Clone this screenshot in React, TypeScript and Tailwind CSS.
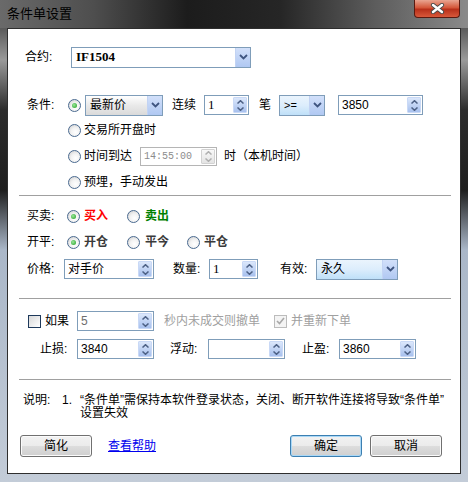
import React from "react";

const F = "font-['Liberation_Sans','Noto_Sans_CJK_SC',sans-serif]";

function Radio({ checked = false }: { checked?: boolean }) {
  return (
    <span className="flex h-[13px] w-[13px] shrink-0 items-center justify-center rounded-full border border-[#4a6a90] bg-[radial-gradient(circle_at_60%_65%,#ffffff_0%,#f2f2f2_45%,#c9c9c9_100%)]">
      {checked && (
        <span className="h-[5px] w-[5px] rounded-full bg-[radial-gradient(circle_at_40%_40%,#9be89b,#1c9a1c)]" />
      )}
    </span>
  );
}

function Check({ checked = false, disabled = false }: { checked?: boolean; disabled?: boolean }) {
  return (
    <span
      className={`flex h-[13px] w-[13px] shrink-0 items-center justify-center border ${
        disabled ? "border-[#bcbcbc] bg-[#f4f4f4]" : "border-[#1e395b] bg-[linear-gradient(135deg,#d8d8d8,#ffffff)]"
      }`}
    >
      {checked && (
        <svg width="9" height="8" viewBox="0 0 9 8">
          <path d="M1 4 L3.5 6.5 L8 1" fill="none" stroke={disabled ? "#a8a8a8" : "#222"} strokeWidth="1.6" />
        </svg>
      )}
    </span>
  );
}

function Up({ c }: { c: string }) {
  return (
    <svg width="7" height="4" viewBox="0 0 7 4">
      <path d="M0.5 3.5 L3.5 0.7 L6.5 3.5" fill="none" stroke={c} strokeWidth="1.5" />
    </svg>
  );
}
function Down({ c }: { c: string }) {
  return (
    <svg width="7" height="4" viewBox="0 0 7 4">
      <path d="M0.5 0.5 L3.5 3.3 L6.5 0.5" fill="none" stroke={c} strokeWidth="1.5" />
    </svg>
  );
}

function Spin({
  cls,
  value,
  valueCls = "text-[12px]",
  disabled = false,
  h = "h-[20px]",
}: {
  cls: string;
  value: string;
  valueCls?: string;
  disabled?: boolean;
  h?: string;
}) {
  return (
    <div
      className={`flex shrink-0 border bg-white ${h} ${disabled ? "border-[#b5b5b5]" : "border-[#7f9db9]"} ${cls}`}
    >
      <div className={`flex min-w-0 flex-1 items-center overflow-hidden whitespace-nowrap pl-[3px] ${valueCls}`}>
        {value}
      </div>
      <div
        className={`m-px flex w-[14px] shrink-0 flex-col items-center justify-center gap-[3px] rounded-[1px] ${
          disabled
            ? "border border-[#d2d2d2] bg-[linear-gradient(#f8f8f8,#e4e4e4)]"
            : "border border-[#c9d9f6] bg-[linear-gradient(#dbe7fb,#a8c1ee)]"
        }`}
      >
        <Up c={disabled ? "#b0b0b0" : "#4d6185"} />
        <Down c={disabled ? "#b0b0b0" : "#4d6185"} />
      </div>
    </div>
  );
}

function Combo({
  cls,
  value,
  bgCls,
  valueCls = "text-[12px]",
}: {
  cls: string;
  value: string;
  bgCls: string;
  valueCls?: string;
}) {
  return (
    <div className={`flex h-[21px] shrink-0 border border-[#7f9db9] ${cls}`}>
      <div className={`flex flex-1 items-center overflow-hidden pl-[4px] ${bgCls} ${valueCls}`}>{value}</div>
      <div className="flex w-[15px] items-center justify-center border-l border-[#c2d3f3] bg-[linear-gradient(#d2e0fa,#b0c8f2)]">
        <svg width="9" height="6" viewBox="0 0 9 6">
          <path d="M1 1 L4.5 4.5 L8 1" fill="none" stroke="#3f5580" strokeWidth="1.8" />
        </svg>
      </div>
    </div>
  );
}

function Btn({ label, def = false }: { label: string; def?: boolean }) {
  return (
    <div
      className={`flex h-[22px] w-[72px] items-center justify-center rounded-[3px] border bg-[linear-gradient(#f2f2f2_0%,#ebebeb_50%,#dddddd_51%,#cfcfcf_100%)] text-[12px] text-black ${
        def ? "border-[#3c7fb1] shadow-[inset_0_0_0_1px_#a9d8f7]" : "border-[#707070] shadow-[inset_0_0_0_1px_#fbfbfb]"
      }`}
    >
      {label}
    </div>
  );
}

function Sep() {
  return <div className="ml-[11px] mr-[9px] h-px shrink-0 bg-[#a0a0a0]" />;
}

export default function App() {
  return (
    <div
      className={`flex h-[482px] w-[468px] flex-col overflow-hidden ${F} bg-[linear-gradient(#6e6e6e_0px,#5a5a5a_28px,#9a9a9a_60px,#2c2c2c_110px,#1e1e1e_190px,#aab7c8_250px,#c3ccd8_482px)]`}
    >
      {/* title bar */}
      <div className="flex h-[28px] shrink-0 items-start justify-between bg-[linear-gradient(90deg,#6a6a6a_0%,#4e4e4e_20%,#1c1c1c_40%,#262626_60%,#5c5c5c_80%,#8a8a8a_100%)]">
        <div className="pl-[7px] pt-[5px] text-[13px] leading-[18px] text-black">条件单设置</div>
        <div className="mr-[8px] flex h-[18px] w-[46px] items-center justify-center rounded-b-[4px] border border-t-0 border-[#5a1a10] bg-[linear-gradient(#e9a591,#d4573a_45%,#b8301a_55%,#d8583a)]">
          <svg width="15" height="11" viewBox="0 0 15 11">
            <path d="M3 2 L12 9 M12 2 L3 9" stroke="#4a4a4a" strokeWidth="4.2" strokeLinecap="round" />
            <path d="M3 2 L12 9 M12 2 L3 9" stroke="#ffffff" strokeWidth="2.4" strokeLinecap="round" />
          </svg>
        </div>
      </div>

      {/* client */}
      <div className="mx-[7px] mb-[8px] flex flex-1 flex-col border border-[#2e2e2e] bg-white text-[12px] text-black">
        {/* 合约 */}
        <div className="mt-[17px] flex h-[22px] items-center pl-[17px]">
          <span className="w-[46px]">合约:</span>
          <Combo
            cls="w-[180px]"
            value="IF1504"
            bgCls="bg-white"
            valueCls="font-['Liberation_Serif',serif] font-bold text-[13px]"
          />
        </div>

        {/* 条件 */}
        <div className="mt-[26px] flex h-[22px] items-center pl-[19px]">
          <span className="w-[41px]">条件:</span>
          <Radio checked />
          <Combo cls="ml-[4px] w-[78px]" value="最新价" bgCls="bg-[linear-gradient(#ffffff,#e9e9e9_50%,#dadada)]" />
          <span className="ml-[9px] w-[24px]">连续</span>
          <Spin cls="ml-[8px] w-[45px]" value="1" valueCls="font-['Liberation_Serif',serif] text-[13px]" />
          <span className="ml-[10px] w-[12px]">笔</span>
          <Combo
            cls="ml-[8px] w-[46px]"
            value=">="
            bgCls="bg-[linear-gradient(#eaf4fd,#dcedfc_50%,#bfe0f8)]"
            valueCls="text-[11px]"
          />
          <Spin cls="ml-[13px] w-[85px]" value="3850" />
        </div>

        <div className="mt-[3px] flex h-[22px] items-center pl-[60px]">
          <Radio />
          <span className="ml-[3px]">交易所开盘时</span>
        </div>

        <div className="mt-[4px] flex h-[22px] items-center pl-[60px]">
          <Radio />
          <span className="ml-[3px] w-[48px]">时间到达</span>
          <Spin
            cls="ml-[8px] w-[77px]"
            h="h-[19px]"
            disabled
            value="14:55:00"
            valueCls="font-['Liberation_Mono',monospace] text-[10px] text-[#8c8c8c]"
          />
          <span className="ml-[7px]">时（本机时间）</span>
        </div>

        <div className="mt-[4px] flex h-[22px] items-center pl-[60px]">
          <Radio />
          <span className="ml-[3px]">预埋，手动发出</span>
        </div>

        <div className="mt-[2px]">
          <Sep />
        </div>

        {/* 买卖 */}
        <div className="mt-[9px] flex h-[22px] items-center pl-[19px]">
          <span className="w-[40px]">买卖:</span>
          <div className="flex w-[60px] items-center">
            <Radio checked />
            <span className="ml-[4px] font-bold text-[#ff0000]">买入</span>
          </div>
          <div className="flex w-[60px] items-center">
            <Radio />
            <span className="ml-[5px] font-bold text-[#008000]">卖出</span>
          </div>
        </div>

        {/* 开平 */}
        <div className="mt-[4px] flex h-[22px] items-center pl-[19px]">
          <span className="w-[40px]">开平:</span>
          <div className="flex w-[60px] items-center">
            <Radio checked />
            <span className="ml-[4px] font-bold text-[#3a3a3a]">开仓</span>
          </div>
          <div className="flex w-[60px] items-center">
            <Radio />
            <span className="ml-[5px] font-bold text-[#3a3a3a]">平今</span>
          </div>
          <div className="flex w-[60px] items-center">
            <Radio />
            <span className="ml-[4px] font-bold text-[#3a3a3a]">平仓</span>
          </div>
        </div>

        {/* 价格 */}
        <div className="mt-[5px] flex h-[22px] items-center pl-[19px]">
          <span className="w-[37px]">价格:</span>
          <Spin cls="w-[90px]" value="对手价" />
          <span className="ml-[19px] w-[36px]">数量:</span>
          <Spin cls="w-[49px]" value="1" valueCls="font-['Liberation_Serif',serif] text-[13px]" />
          <span className="ml-[22px] w-[36px]">有效:</span>
          <Combo cls="w-[82px]" value="永久" bgCls="bg-[linear-gradient(#eaf4fd,#dcedfc_50%,#bfe0f8)]" />
        </div>

        <div className="mt-[18px]">
          <Sep />
        </div>

        {/* 如果 */}
        <div className="mt-[11px] flex h-[22px] items-center pl-[20px]">
          <Check />
          <span className="ml-[4px] w-[24px]">如果</span>
          <Spin cls="ml-[8px] w-[77px]" value="5" valueCls="text-[12px] text-[#6d6d6d]" />
          <span className="ml-[10px] text-[#a0a0a0]">秒内未成交则撤单</span>
          <span className="ml-[14px]">
            <Check checked disabled />
          </span>
          <span className="ml-[4px] text-[#a0a0a0]">并重新下单</span>
        </div>

        {/* 止损 */}
        <div className="mt-[6px] flex h-[22px] items-center pl-[32px]">
          <span className="w-[37px]">止损:</span>
          <Spin cls="w-[77px]" value="3840" />
          <span className="ml-[16px] w-[38px]">浮动:</span>
          <Spin cls="w-[77px]" value="" />
          <span className="ml-[17px] w-[37px]">止盈:</span>
          <Spin cls="w-[77px]" value="3860" />
        </div>

        <div className="mt-[19px]">
          <Sep />
        </div>

        {/* 说明 */}
        <div className="mt-[14px] flex pl-[15px] leading-[13px]">
          <span className="w-[39px]">说明:</span>
          <span className="w-[18px]">1.</span>
          <div className="flex flex-col whitespace-nowrap">
            <span>“条件单”需保持本软件登录状态，关闭、断开软件连接将导致“条件单”</span>
            <span>设置失效</span>
          </div>
        </div>

        {/* buttons */}
        <div className="mt-[15px] flex items-center justify-between pl-[12px] pr-[18px]">
          <div className="flex items-center">
            <Btn label="简化" />
            <span className="ml-[16px] text-[#0000ee] underline">查看帮助</span>
          </div>
          <div className="flex items-center gap-[8px]">
            <Btn label="确定" def />
            <Btn label="取消" />
          </div>
        </div>
      </div>
    </div>
  );
}
